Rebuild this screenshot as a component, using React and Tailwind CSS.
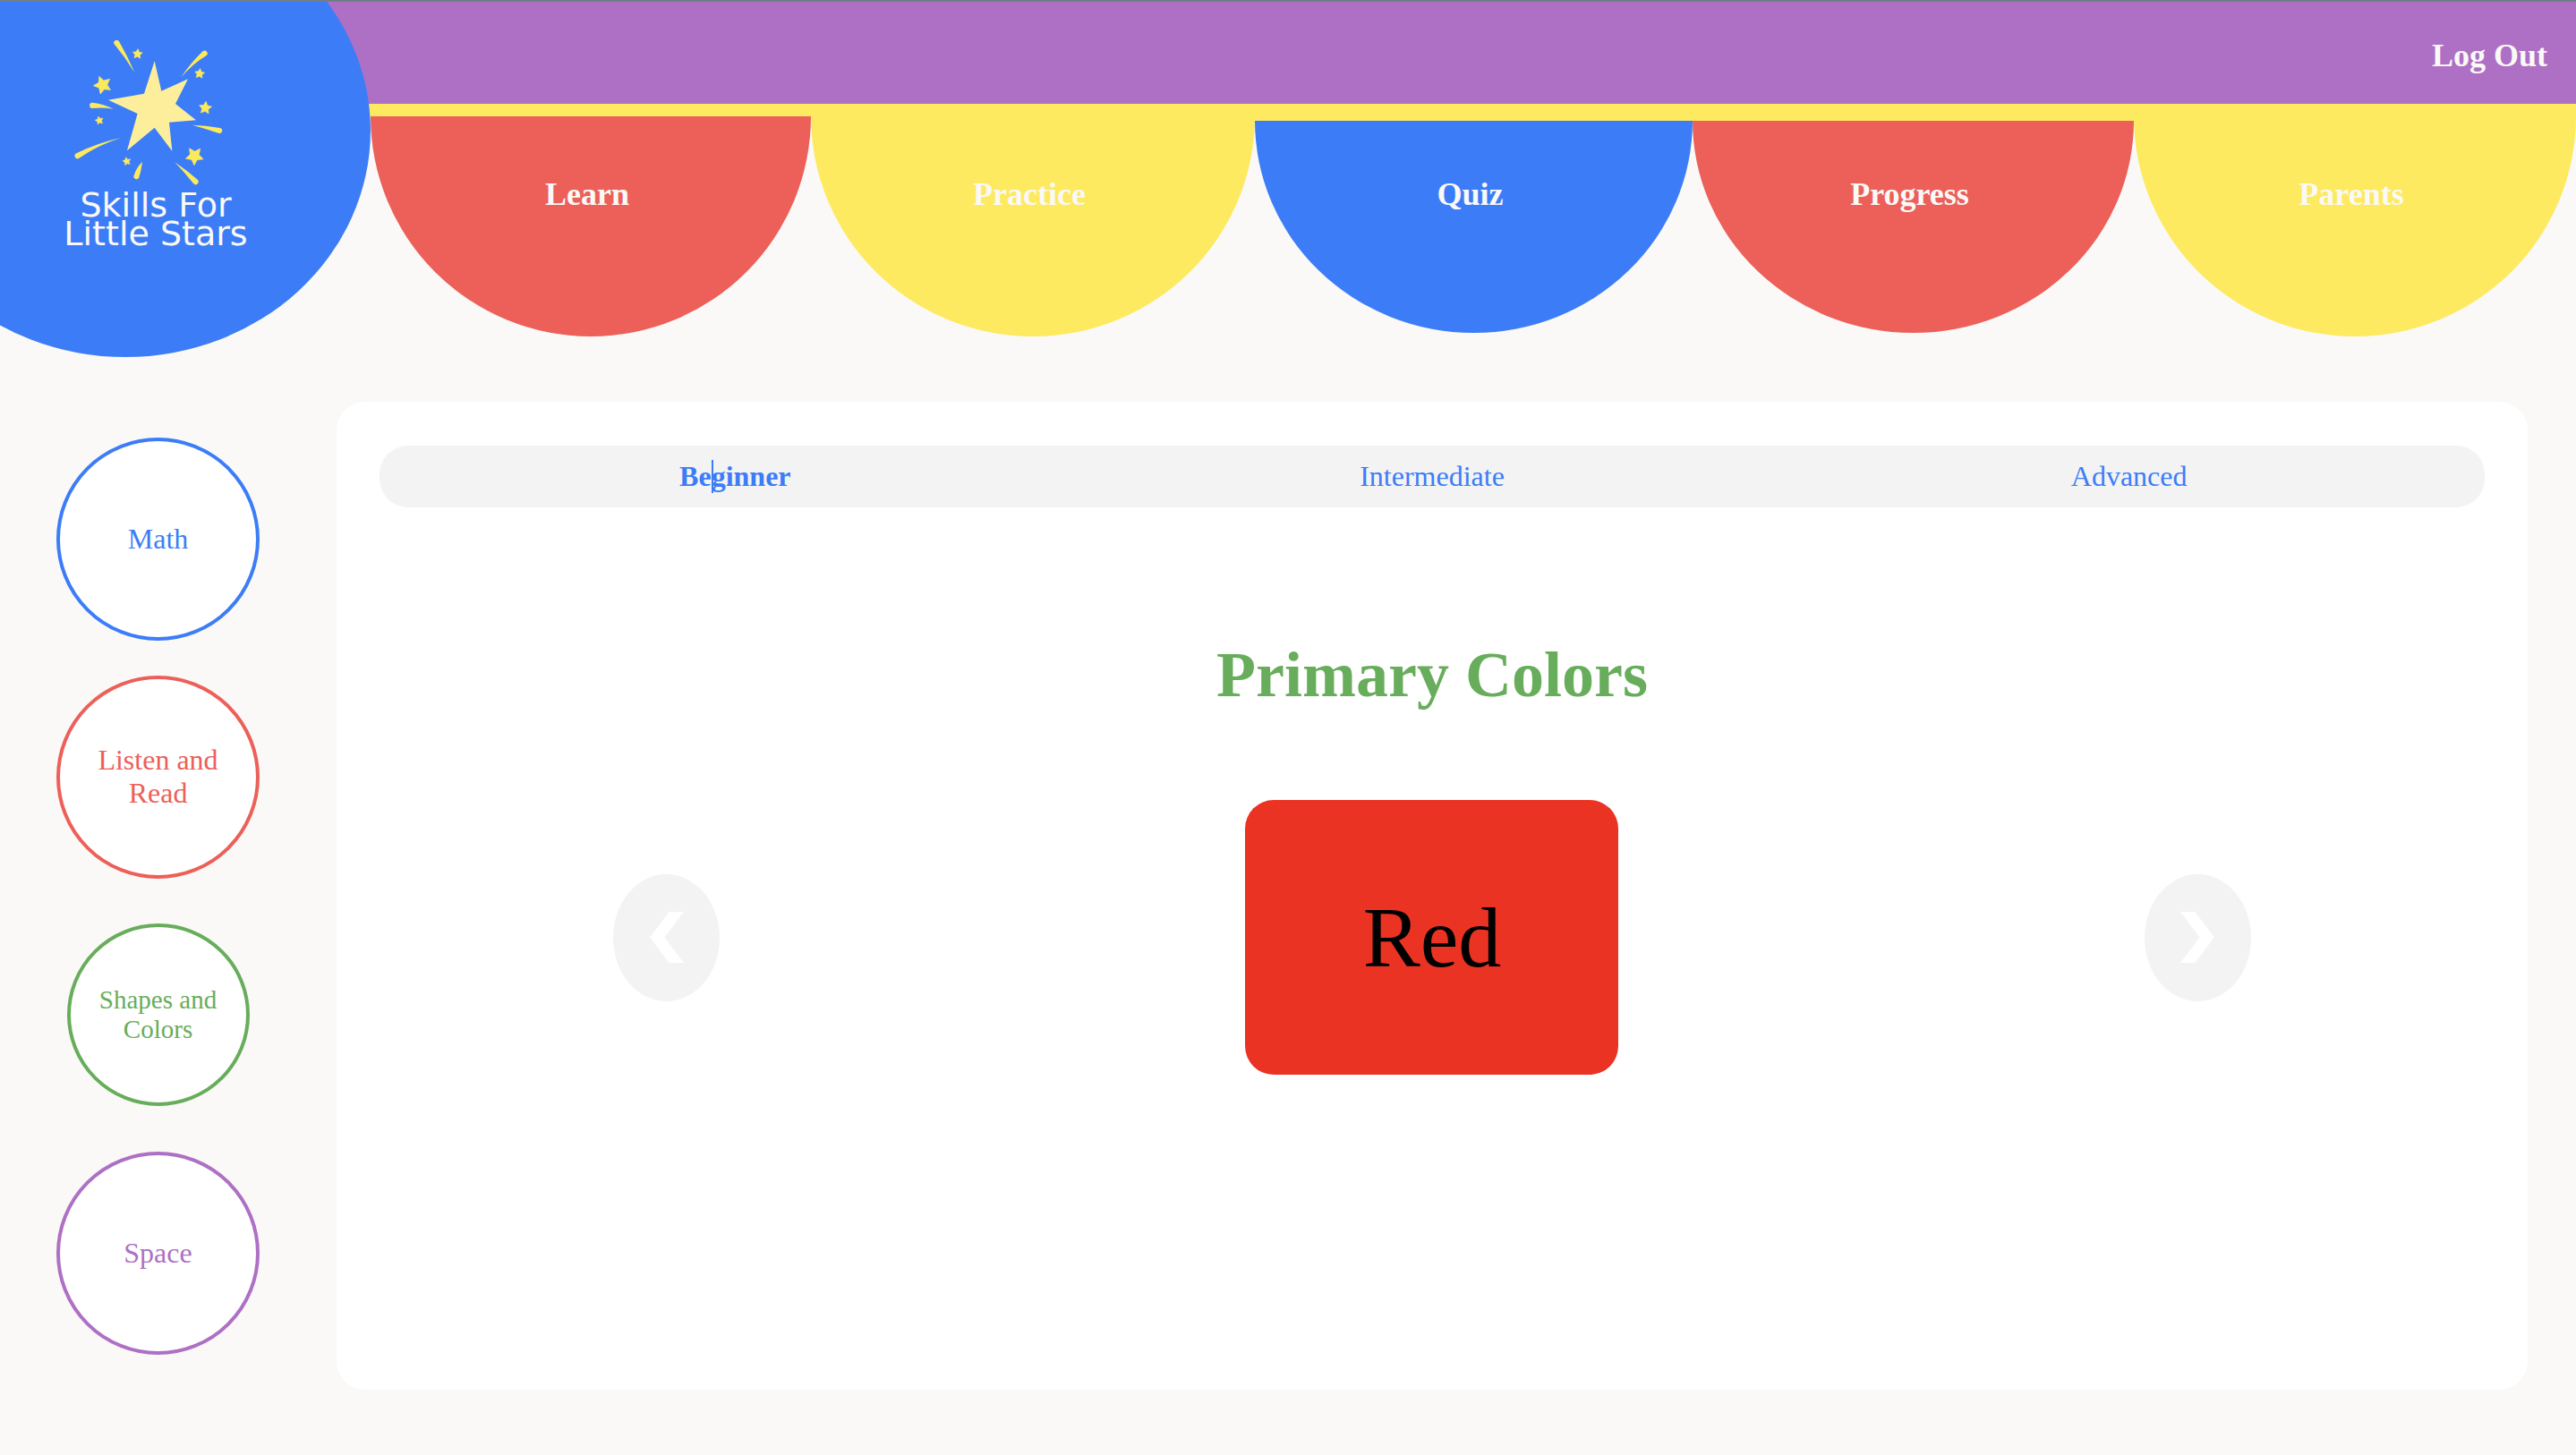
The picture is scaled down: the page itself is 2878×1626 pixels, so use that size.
import React from "react";

const NAV = [
  { label: "Learn", bg: "bg-[#ec6059]", raised: true },
  { label: "Practice", bg: "bg-[#fdea60]", raised: true },
  { label: "Quiz", bg: "bg-[#3c7df7]", raised: false },
  { label: "Progress", bg: "bg-[#ec6059]", raised: false },
  { label: "Parents", bg: "bg-[#fdea60]", raised: true },
];

const TOPICS = [
  { label: "Math", tone: "border-[#3c7df7] text-[#3c7df7]" },
  { label: "Listen and Read", tone: "border-[#ec6059] text-[#ec6059]" },
  { label: "Shapes and Colors", tone: "border-[#67ad5b] text-[#67ad5b]", active: true },
  { label: "Space", tone: "border-[#ae70c4] text-[#ae70c4]" },
];

// Small five-pointed stars: centre, outer radius, rotation in degrees.
const STARS = [
  [340, 120, 17, 4],
  [223, 224, 31, -22],
  [548, 186, 17, 6],
  [567, 301, 22, 6],
  [212, 343, 14, -14],
  [304, 480, 14, -12],
  [531, 462, 31, 38],
];

const STREAKS = [
  "M330 182 Q306 126 278 78 A9 9 0 1 0 262 87 Q298 130 330 182Z",
  "M486 198 Q518 150 559 111 A9 9 0 1 1 571 125 Q526 152 486 198Z",
  "M259 304 Q226 288 190 283 A9 9 0 1 0 188 302 Q222 298 259 304Z",
  "M284 401 Q206 418 135 453 A9 9 0 1 0 143 470 Q210 424 284 401Z",
  "M523 358 Q568 359 616 368 A9 9 0 1 1 613 386 Q568 370 523 358Z",
  "M356 481 Q336 501 328 527 A9 9 0 1 0 345 534 Q353 508 356 481Z",
  "M465 483 Q506 511 541 541 A9 9 0 1 1 528 555 Q498 518 465 483Z",
];

function starPoints(cx, cy, r, turn) {
  return Array.from({ length: 10 }, (_, i) => {
    const radius = i % 2 ? r * 0.5 : r;
    const angle = ((turn - 90 + i * 36) * Math.PI) / 180;
    return `${(cx + radius * Math.cos(angle)).toFixed(1)},${(cy + radius * Math.sin(angle)).toFixed(1)}`;
  }).join(" ");
}

function StarBurst() {
  return (
    <svg viewBox="128 68 498 492" className="h-[164px] w-[166px]" aria-hidden="true">
      <polygon
        fill="#fdee9c"
        points="397,144 420,244 509,204 467,287 536,342 446,349 456,445 397,367 305,444 340,320 242,274 362,253"
      />
      <g fill="#fde95c" stroke="#fde95c" strokeWidth="2" strokeLinejoin="round">
        {STARS.map(([x, y, r, turn]) => (
          <polygon key={`${x}-${y}`} points={starPoints(x, y, r, turn)} />
        ))}
      </g>
      <g fill="#fde95c">
        {STREAKS.map((d) => (
          <path key={d} d={d} />
        ))}
      </g>
    </svg>
  );
}

function Chevron({ flip }) {
  return (
    <svg viewBox="0 0 38 57" className={flip ? "h-[57px] w-[38px] rotate-180" : "h-[57px] w-[38px]"} aria-hidden="true">
      <polygon fill="#fff" points="21.5,0 38,0 16.5,28.5 38,57 21.5,57 0,28.5" />
    </svg>
  );
}

function ArrowButton({ label, flip }) {
  return (
    <button
      type="button"
      aria-label={label}
      className="flex h-[142px] w-[119px] items-center justify-center rounded-[50%] bg-[#f3f3f3]"
    >
      <Chevron flip={flip} />
    </button>
  );
}

function Header() {
  return (
    <header className="relative overflow-hidden border-t-2 border-[#6f7f86] pb-[23px]">
      <div className="flex h-[128px] justify-end border-b-[14px] border-[#fdea60] bg-[#ae70c4] pt-10 pr-8">
        <a href="#logout" className="text-[36px] leading-[40px] font-bold text-[#faf9f7]">
          Log Out
        </a>
      </div>

      <nav aria-label="Main" className="pl-[414px]">
        <ul className="grid grid-cols-[492fr_496fr_489fr_493fr_494fr] items-start">
          {NAV.map(({ label, bg, raised }) => (
            <li key={label}>
              {!raised && <div className="h-[5px] bg-[#fdea60]" />}
              <a
                href={`#${label.toLowerCase()}`}
                className={`block pr-2 text-center text-[36px] leading-[40px] font-bold text-[#faf9f7] [border-radius:0_0_50%_50%/0_0_100%_100%] ${
                  raised ? "h-[246px] pt-[67px]" : "h-[237px] pt-[62px]"
                } ${bg}`}
              >
                {label}
              </a>
            </li>
          ))}
        </ul>
      </nav>

      <a
        href="#home"
        className="absolute -top-[109px] -left-[134px] flex h-[506px] w-[548px] flex-col items-center rounded-[50%] bg-[#3c7df7] pt-[150px] pl-[52px] text-center font-['DejaVu_Sans',sans-serif] text-[38px] leading-[32px] text-[#faf9f7]"
      >
        <StarBurst />
        <span className="mt-1.5 w-[240px] pl-4">Skills For Little Stars</span>
      </a>
    </header>
  );
}

function Sidebar() {
  return (
    <aside className="flex w-[353px] shrink-0 flex-col justify-center">
      <ul>
        {TOPICS.map(({ label, tone, active }) => (
          <li key={label} className="flex h-[266px] items-center justify-center">
            <button
              type="button"
              className={`flex items-center justify-center rounded-full border-4 bg-white text-center ${
                active
                  ? "size-[204px] px-6 text-[29px] leading-[33px]"
                  : "size-[227px] px-9 text-[32px] leading-[37px]"
              } ${tone}`}
            >
              {label}
            </button>
          </li>
        ))}
      </ul>
    </aside>
  );
}

function Lesson() {
  return (
    <main className="mr-[54px] ml-[23px] flex-1 rounded-[32px] bg-white px-12 py-[49px]">
      <div
        role="tablist"
        aria-label="Level"
        className="grid h-[69px] grid-cols-3 rounded-[32px] bg-[#f3f3f3] px-2 text-[32px] leading-[37px] text-[#3c7df7]"
      >
        <button type="button" role="tab" aria-selected="true" className="font-bold">
          Be
          <span className="relative" aria-hidden="true">
            <span className="absolute top-0 left-0 h-[37px] w-0.5 bg-[#3c7df7]" />
          </span>
          ginner
        </button>
        <button type="button" role="tab" aria-selected="false">
          Intermediate
        </button>
        <button type="button" role="tab" aria-selected="false">
          Advanced
        </button>
      </div>

      <h1 className="mt-[147px] text-center text-[72px] leading-[80px] font-bold text-[#67ad5b]">Primary Colors</h1>

      <div className="mx-auto mt-[100px] flex w-7/9 items-center justify-between">
        <ArrowButton label="Previous" />
        <div className="flex h-[307px] w-[417px] items-center justify-center rounded-[32px] bg-[#ea3323] text-[96px] leading-[106px] text-black">
          Red
        </div>
        <ArrowButton label="Next" flip />
      </div>
    </main>
  );
}

export default function App() {
  return (
    <div className="flex min-h-screen flex-col bg-[#faf9f7] font-['Liberation_Serif',serif]">
      <Header />
      <div className="flex flex-1 pt-[50px] pb-[73px]">
        <Sidebar />
        <Lesson />
      </div>
    </div>
  );
}
